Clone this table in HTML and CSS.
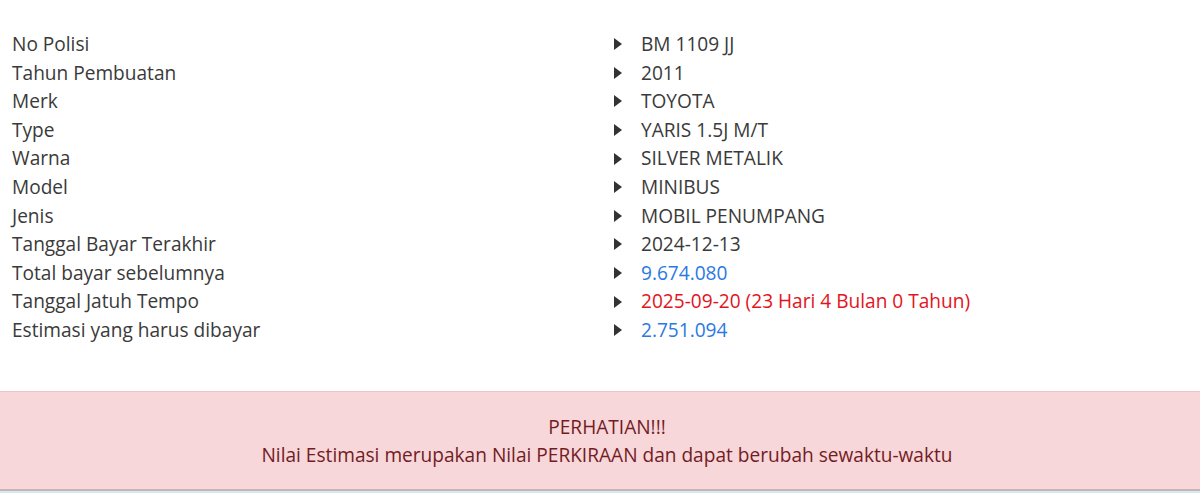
FILE: index.html
```html
<!DOCTYPE html>
<html lang="id">
<head>
<meta charset="utf-8">
<title>Info Kendaraan</title>
<link rel="stylesheet" href="styles.css">
</head>
<body>
<div class="page">
  <div class="details">
    <div class="row"><div class="label">No Polisi</div><div class="value"><span class="caret"></span><span>BM 1109 JJ</span></div></div>
    <div class="row"><div class="label">Tahun Pembuatan</div><div class="value"><span class="caret"></span><span>2011</span></div></div>
    <div class="row"><div class="label">Merk</div><div class="value"><span class="caret"></span><span>TOYOTA</span></div></div>
    <div class="row"><div class="label">Type</div><div class="value"><span class="caret"></span><span>YARIS 1.5J M/T</span></div></div>
    <div class="row"><div class="label">Warna</div><div class="value"><span class="caret"></span><span>SILVER METALIK</span></div></div>
    <div class="row"><div class="label">Model</div><div class="value"><span class="caret"></span><span>MINIBUS</span></div></div>
    <div class="row"><div class="label">Jenis</div><div class="value"><span class="caret"></span><span>MOBIL PENUMPANG</span></div></div>
    <div class="row"><div class="label">Tanggal Bayar Terakhir</div><div class="value"><span class="caret"></span><span>2024-12-13</span></div></div>
    <div class="row"><div class="label">Total bayar sebelumnya</div><div class="value"><span class="caret"></span><span class="blue">9.674.080</span></div></div>
    <div class="row"><div class="label">Tanggal Jatuh Tempo</div><div class="value"><span class="caret"></span><span class="red">2025-09-20 (23 Hari 4 Bulan 0 Tahun)</span></div></div>
    <div class="row"><div class="label">Estimasi yang harus dibayar</div><div class="value"><span class="caret"></span><span class="blue">2.751.094</span></div></div>
  </div>
  <div class="alert">
    <div>PERHATIAN!!!</div>
    <div>Nilai Estimasi merupakan Nilai PERKIRAAN dan dapat berubah sewaktu-waktu</div>
  </div>
  <div class="next"></div>
</div>
</body>
</html>
```
FILE: styles.css
```css
html, body {
  margin: 0;
  padding: 0;
  background: #fff;
}
body {
  font-family: "Open Sans", "Liberation Sans", sans-serif;
  font-size: 19.1px;
  line-height: 28.6px;
  color: #3a3a3a;
}
.details {
  padding-top: 30px;
  padding-bottom: 46px;
}
.row {
  display: grid;
  grid-template-columns: 600px 600px;
}
.label {
  padding-left: 12px;
}
.value {
  display: flex;
  align-items: center;
  padding-left: 14px;
}
.caret {
  width: 0;
  height: 0;
  border-top: 6px solid transparent;
  border-bottom: 6px solid transparent;
  border-left: 8px solid #333;
  margin-right: 19px;
}
.blue { color: #2a7ae2; }
.red { color: #e3141e; }
.alert {
  background: #f8d7da;
  border-top: 1px solid #f1c3c8;
  border-bottom: 2px solid #c9b3b6;
  color: #721c24;
  text-align: center;
  padding: 21px 20px 19px 34px;
}
.next {
  height: 10px;
  background: #d1ecf1;
}
```
